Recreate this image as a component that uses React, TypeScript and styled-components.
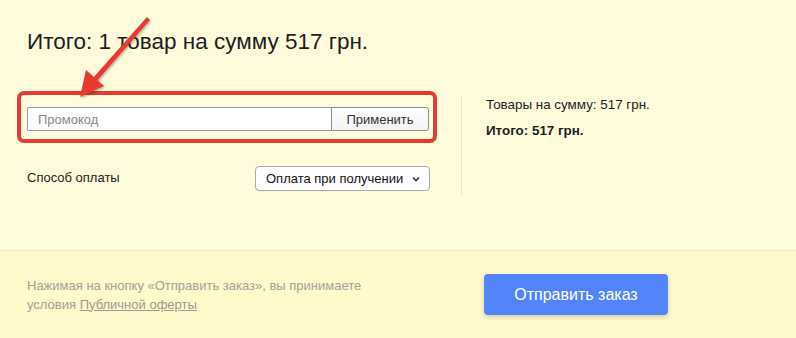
import React from 'react'
import styled, { createGlobalStyle } from 'styled-components'

const GlobalStyle = createGlobalStyle`
  html, body {
    margin: 0;
    padding: 0;
    background: #fffcde;
    font-family: "Liberation Sans", Arial, sans-serif;
    color: #222;
  }
  * { box-sizing: border-box; }
`

const Page = styled.div`
  position: relative;
  width: 796px;
  height: 338px;
  overflow: hidden;
  display: flex;
  flex-direction: column;
`

const Main = styled.section`
  height: 251px;
  padding: 29px 0 0 27px;
  background: #fffcde;
  border-bottom: 1px solid #f1e9bd;
`

const Title = styled.h1`
  margin: 0 0 37px 0;
  font-size: 22.5px;
  font-weight: 400;
  line-height: 25px;
  color: #1e1e1e;
`

const Columns = styled.div`
  display: grid;
  grid-template-columns: 434px 1fr;
`

const LeftCol = styled.div`
  display: flex;
  flex-direction: column;
`

const Highlight = styled.div`
  margin-left: -10px;
  width: 420px;
  height: 52px;
  border: 4px solid #e63b2e;
  border-radius: 7px;
  padding: 12px 4px 0 6px;
`

const PromoRow = styled.div`
  display: flex;
  height: 24px;
`

const PromoInput = styled.input`
  width: 304px;
  height: 24px;
  border: 1px solid #9a9a9a;
  border-right: none;
  border-radius: 2px 0 0 2px;
  padding: 0 10px;
  font-family: inherit;
  font-size: 13px;
  color: #333;
  background: #fff;
  outline: none;
  &::placeholder { color: #8a8a8a; }
`

const ApplyButton = styled.button`
  width: 98px;
  height: 24px;
  border: 1px solid #8e8e8e;
  border-radius: 0 3px 3px 0;
  background: linear-gradient(#ffffff, #f4f4f4);
  font-family: inherit;
  font-size: 13px;
  color: #333;
  padding: 0;
`

const PaymentRow = styled.div`
  margin-top: 23px;
  width: 403px;
  display: flex;
  justify-content: space-between;
  align-items: flex-start;
`

const Label = styled.span`
  font-size: 13px;
  line-height: 18px;
  margin-top: 3px;
  color: #222;
`

const Select = styled.div`
  width: 175px;
  height: 25px;
  border: 1px solid #a9a9a9;
  border-radius: 4px;
  background: #fff;
  display: flex;
  align-items: center;
  justify-content: space-between;
  padding: 0 8px 0 10px;
  font-size: 13px;
  white-space: nowrap;
  color: #111;
`

const RightCol = styled.div`
  margin-top: 5px;
  height: 99px;
  border-left: 1px solid #efe7c2;
  padding: 1px 0 0 24px;
`

const SummaryLine = styled.div<{ $bold?: boolean }>`
  font-size: 13.4px;
  line-height: 16px;
  font-weight: ${p => (p.$bold ? 700 : 400)};
  margin-bottom: 10px;
  color: #1e1e1e;
`

const Footer = styled.footer`
  flex: 1;
  background: #fff9cb;
  display: grid;
  grid-template-columns: 457px 1fr;
  align-items: center;
  padding-left: 27px;
`

const Terms = styled.p`
  margin: 0;
  font-size: 13px;
  line-height: 19px;
  color: #a3a29a;
`

const TermsLink = styled.a`
  color: #9a9a94;
  text-decoration: underline;
`

const SubmitButton = styled.button`
  width: 184px;
  height: 41px;
  border: none;
  border-radius: 4px;
  background: #5285fb;
  color: #fff;
  font-family: inherit;
  font-size: 16px;
  box-shadow: 0 2px 5px rgba(0, 0, 0, 0.18);
  padding: 0;
`

const Arrow = styled.svg`
  position: absolute;
  left: 0;
  top: 0;
  pointer-events: none;
`

const Chevron = () => (
  <svg width="10" height="8" viewBox="0 0 10 8">
    <path d="M2 2.5 L5 5.5 L8 2.5" fill="none" stroke="#333" strokeWidth="1.6" />
  </svg>
)

export default function App() {
  return (
    <>
      <GlobalStyle />
      <Page>
        <Main>
          <Title>Итого: 1 товар на сумму 517 грн.</Title>
          <Columns>
            <LeftCol>
              <Highlight>
                <PromoRow>
                  <PromoInput placeholder="Промокод" />
                  <ApplyButton>Применить</ApplyButton>
                </PromoRow>
              </Highlight>
              <PaymentRow>
                <Label>Способ оплаты</Label>
                <Select>
                  <span>Оплата при получении</span>
                  <Chevron />
                </Select>
              </PaymentRow>
            </LeftCol>
            <RightCol>
              <SummaryLine>Товары на сумму: 517 грн.</SummaryLine>
              <SummaryLine $bold>Итого: 517 грн.</SummaryLine>
            </RightCol>
          </Columns>
        </Main>
        <Footer>
          <Terms>
            Нажимая на кнопку «Отправить заказ», вы принимаете
            <br />
            условия <TermsLink href="#">Публичной оферты</TermsLink>
          </Terms>
          <SubmitButton>Отправить заказ</SubmitButton>
        </Footer>
        <Arrow width="796" height="338" viewBox="0 0 796 338">
          <defs>
            <filter id="sh" x="-20%" y="-20%" width="140%" height="140%">
              <feDropShadow dx="1" dy="1.5" stdDeviation="1.2" floodColor="#000" floodOpacity="0.3" />
            </filter>
          </defs>
          <g filter="url(#sh)" fill="#e63b2e">
            <path d="M147 17 L150 20 L96 82 L92 79 Z" />
            <path d="M80 97 L86 70 L104 86 Z" />
          </g>
        </Arrow>
      </Page>
    </>
  )
}
